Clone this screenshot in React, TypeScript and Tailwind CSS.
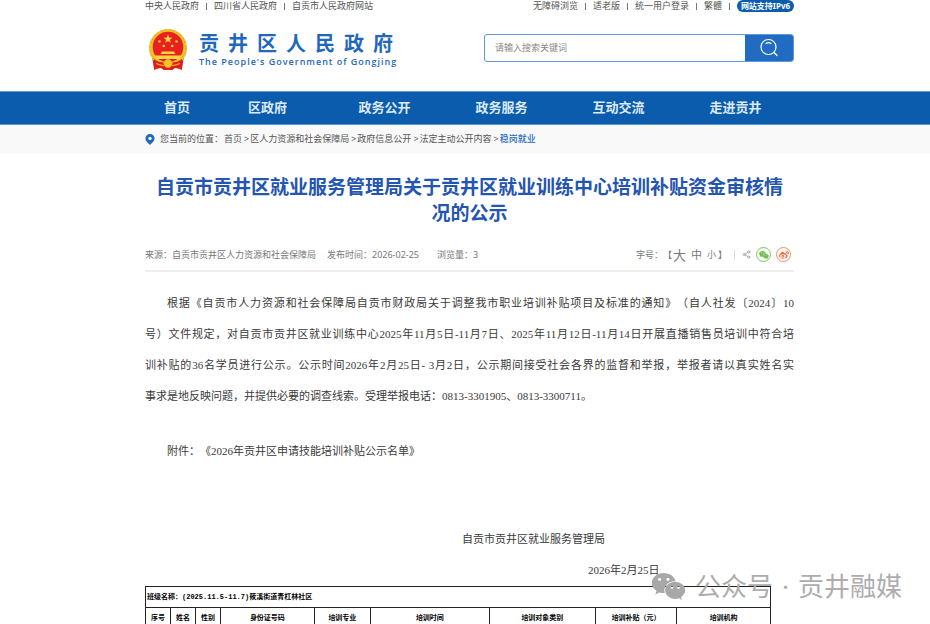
import { FaWeixin, FaWeibo } from "react-icons/fa";
import { Share2 } from "lucide-react";

const container = "pl-[145px] pr-[136px]";

function Emblem() {
  return (
    <svg viewBox="0 0 40 42" className="h-[42px] w-10 shrink-0" aria-hidden="true">
      <path d="M4 27 L14 33 H26 L36 27 L34 40 L27 39 L24 41 H16 L13 39 L6 40 Z" fill="#df1f1d" />
      <circle cx="20" cy="19" r="19" fill="#f2c22b" />
      <circle cx="20" cy="19" r="17.8" fill="none" stroke="#e3a51f" strokeWidth="1" strokeDasharray="2 2" />
      <circle cx="20" cy="18" r="15.3" fill="#e8201f" />
      <path d="M20 5.5 l1.2 3 3.2 .2 -2.5 2 .9 3.1 -2.8 -1.8 -2.8 1.8 .9 -3.1 -2.5 -2 3.2 -.2z" fill="#fbd63c" />
      <g fill="#fbd63c">
        <circle cx="11.5" cy="12.5" r="1.3" />
        <circle cx="28.5" cy="12.5" r="1.3" />
        <circle cx="15.8" cy="17" r="1.3" />
        <circle cx="24.2" cy="17" r="1.3" />
        <path d="M14 22.5 h12 l1.5 2.5 h-15z" />
        <path d="M7 26.5 h26 l-1.5 3.5 h-23z" />
      </g>
      <path d="M6 30 Q12 34 15 33 L17 37 H23 L25 33 Q28 34 34 30 L34 41 L27 38 L24 41 H16 L13 38 L6 41 Z" fill="#df1f1d" />
      <circle cx="20" cy="34.5" r="4.2" fill="#f2c22b" />
      <path d="M8 34.5 q5 2 8 2 M32 34.5 q-5 2 -8 2" fill="none" stroke="#f2c22b" strokeWidth="1.2" />
    </svg>
  );
}

function Separator() {
  return <span className="mx-[7px] h-[7px] w-px bg-[#777]" />;
}

function TopLinks({ items, trailing }: { items: string[]; trailing?: boolean }) {
  return (
    <>
      {items.map((item, i) => (
        <span key={item} className="flex items-center">
          <a href="#">{item}</a>
          {(trailing || i < items.length - 1) && <Separator />}
        </span>
      ))}
    </>
  );
}

const crumbs = ["首页", "区人力资源和社会保障局", "政府信息公开", "法定主动公开内容"];

const columns: [string, string][] = [
  ["序号", "w-[4%]"],
  ["姓名", "w-[4%]"],
  ["性别", "w-[4%]"],
  ["身份证号码", "w-[15%]"],
  ["培训专业", "w-[9%]"],
  ["培训时间", "w-[19%]"],
  ["培训对象类别", "w-[17%]"],
  ["培训补贴（元）", "w-[13%]"],
  ["培训机构", "w-[15%]"],
];

export default function App() {
  return (
    <div className="relative overflow-hidden bg-white font-['Noto_Sans','Noto_Sans_CJK_SC',sans-serif] text-[9px] text-[#555] [text-spacing-trim:space-all]">
      <header className={container}>
        <div className="flex h-3 items-center justify-between leading-3">
          <div className="flex items-center">
            <TopLinks items={["中央人民政府", "四川省人民政府", "自贡市人民政府网站"]} />
          </div>
          <div className="flex items-center">
            <TopLinks items={["无障碍浏览", "适老版", "统一用户登录", "繁體"]} trailing />
            <a href="#" className="flex h-3 w-[57px] items-center justify-center rounded-full bg-[#0b5cad] text-[8px] font-bold text-white">
              网站支持IPv6
            </a>
          </div>
        </div>
        <div className="flex h-[79px] items-start justify-between pt-[17px]">
          <a href="#" className="flex items-start gap-[11px] pl-[3px] text-[#1f68bd]">
            <Emblem />
            <span className="flex flex-col pt-1">
              <span className="font-['Liberation_Sans','Noto_Sans_CJK_SC',sans-serif] text-[20px] leading-[23px] font-bold tracking-[9px]">贡井区人民政府</span>
              <span className="font-['Open_Sans',sans-serif] text-[9px] leading-3 font-semibold tracking-[1px]">
                The People's Government of Gongjing
              </span>
            </span>
          </a>
          <form className="mt-[5px] flex h-7 w-[310px] overflow-hidden rounded-[3px] border border-[#5c9bdd]" onSubmit={(e) => e.preventDefault()}>
            <input
              type="text"
              aria-label="搜索"
              placeholder="请输入搜索关键词"
              className="min-w-0 flex-1 px-[10px] text-[9px] outline-none placeholder:text-[#888]"
            />
            <button type="submit" aria-label="搜索" className="flex w-12 items-center justify-center bg-[#226bc2] text-white">
              <svg viewBox="0 0 20 20" className="size-5" fill="none" stroke="currentColor" strokeWidth="1.2" strokeLinecap="round">
                <circle cx="9.5" cy="9" r="7.5" />
                <path d="M15 14.5 L18 17.5 M7 5.5 Q9.5 3.8 12 5.5" />
              </svg>
            </button>
          </form>
        </div>
      </header>

      <nav className={`${container} flex h-[34px] items-center border-y border-[#5f97d0] bg-[#0b5cad] text-[13px] font-bold text-[#dce9f6]`}>
        <a href="#" className="w-16 text-center">首页</a>
        {["区政府", "政务公开", "政务服务", "互动交流", "走进贡井"].map((item) => (
          <a key={item} href="#" className="w-[117px] text-center">{item}</a>
        ))}
      </nav>

      <div className={`${container} flex h-7 items-center gap-px bg-[#f9f9f9]`}>
        <svg viewBox="0 0 10 12" className="mr-1 h-[11px] w-[10px]" aria-hidden="true">
          <path d="M5 0a5 5 0 0 1 5 5c0 3-3 5-5 7-2-2-5-4-5-7a5 5 0 0 1 5-5z" fill="#1f68c4" />
          <circle cx="5" cy="4.8" r="1.8" fill="#fff" />
        </svg>
        <span>您当前的位置：</span>
        {crumbs.map((crumb) => (
          <span key={crumb} className="flex gap-[2px]">
            <a href="#">{crumb}</a>
            <span>&gt;</span>
          </span>
        ))}
        <a href="#" className="font-medium text-[#2a6cc0]">稳岗就业</a>
      </div>

      <main className={container}>
        <h1 className="pt-[21px] text-center text-[19px] leading-[26px] font-bold text-[#2455b0]">
          自贡市贡井区就业服务管理局关于贡井区就业训练中心培训补贴资金审核情
          <br />
          况的公示
        </h1>

        <div className="mt-[13px] flex h-[33px] items-center border-b-2 border-[#eee] text-[#777]">
          <span className="w-[182px]">来源：自贡市贡井区人力资源和社会保障局</span>
          <span className="w-[110px]">发布时间：2026-02-25</span>
          <span>浏览量：3</span>
          <div className="ml-auto flex items-center">
            <span>字号：【</span>
            <button type="button" className="ml-px text-[13px] leading-4">大</button>
            <button type="button" className="mx-[5px] text-[11px] leading-4">中</button>
            <button type="button" className="leading-4">小</button>
            <span className="ml-[2px]">】</span>
            <span className="mx-[7px] h-[10px] w-px bg-[#ddd]" />
            <button type="button" aria-label="分享"><Share2 className="size-[9px] text-[#999]" /></button>
            <button type="button" aria-label="微信" className="ml-[5px] flex size-[15px] items-center justify-center rounded-full border border-[#7cc65a] text-[#6cbf45]">
              <FaWeixin className="size-[10px]" />
            </button>
            <button type="button" aria-label="微博" className="mx-[3px] ml-[5px] flex size-[15px] items-center justify-center rounded-full border border-[#f98a66] text-[#f56a3c]">
              <FaWeibo className="size-[10px]" />
            </button>
          </div>
        </div>

        <article className="pt-4 font-['Liberation_Serif','Noto_Sans_CJK_SC',serif] text-[11px] leading-[31px] text-[#3a3a3a]">
          <p className="indent-[22px] [text-align-last:justify]">
            根据《自贡市人力资源和社会保障局自贡市财政局关于调整我市职业培训补贴项目及标准的通知》（自人社发〔2024〕10
            <br />
            号）文件规定，对自贡市贡井区就业训练中心2025年11月5日-11月7日、2025年11月12日-11月14日开展直播销售员培训中符合培
            <br />
            训补贴的36名学员进行公示。公示时间2026年2月25日- 3月2日，公示期间接受社会各界的监督和举报，举报者请以真实姓名实
          </p>
          <p>事求是地反映问题，并提供必要的调查线索。受理举报电话：0813-3301905、0813-3300711。</p>
          <p className="mt-6 indent-[22px]">附件：《2026年贡井区申请技能培训补贴公示名单》</p>
          <p className="mt-[57px] pl-[317px]">自贡市贡井区就业服务管理局</p>
          <p className="pl-[443px]">2026年2月25日</p>
        </article>

        <div className="pr-[23px]">
          <table className="w-full table-fixed border-collapse font-['Liberation_Mono','Noto_Sans_CJK_SC',monospace] text-[7px] leading-[10px] font-bold text-black">
            <colgroup>
              {columns.map(([name, width]) => (
                <col key={name} className={width} />
              ))}
            </colgroup>
            <thead>
              <tr className="h-[21px]">
                <th colSpan={9} className="border border-[#222] px-px text-left">
                  班级名称：(2025.11.5-11.7)筱溪街道青杠林社区
                </th>
              </tr>
              <tr className="h-[17px]">
                {columns.map(([name]) => (
                  <th key={name} scope="col" className="border border-b-0 border-[#222] pt-1">{name}</th>
                ))}
              </tr>
            </thead>
          </table>
        </div>
      </main>

      <div className="absolute right-7 bottom-[21px] flex items-center gap-[9px] text-[26px] leading-8 text-[#adadad]">
        <FaWeixin className="size-[35px] text-[#a8a8a8]" />
        <span>公众号</span>
        <span>·</span>
        <span>贡井融媒</span>
      </div>
    </div>
  );
}
